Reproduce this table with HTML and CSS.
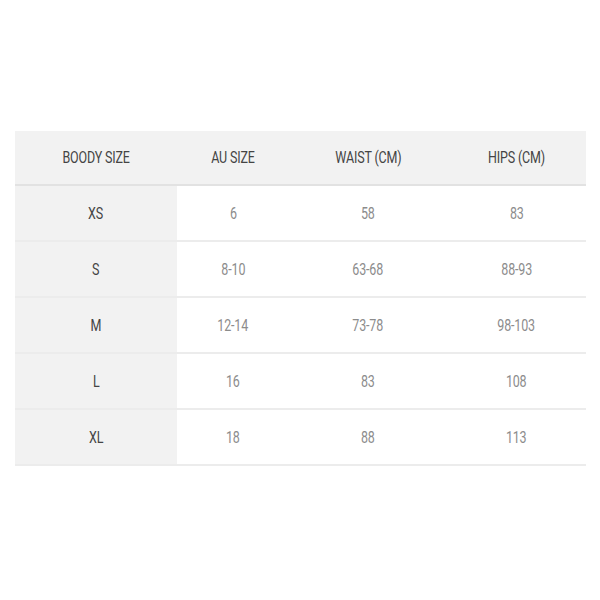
FILE: index.html
```html
<!DOCTYPE html>
<html>
<head>
<meta charset="utf-8">
<link rel="stylesheet" href="styles.css">
</head>
<body>
<div class="page">
<table class="size-table">
  <thead>
    <tr><th class="c1"><span>BOODY SIZE</span></th><th class="c2"><span>AU SIZE</span></th><th class="c3"><span>WAIST (CM)</span></th><th class="c4"><span>HIPS (CM)</span></th></tr>
  </thead>
  <tbody>
    <tr><td class="lab"><span>XS</span></td><td><span>6</span></td><td><span>58</span></td><td><span>83</span></td></tr>
    <tr><td class="lab"><span>S</span></td><td><span>8-10</span></td><td><span>63-68</span></td><td><span>88-93</span></td></tr>
    <tr><td class="lab"><span>M</span></td><td><span>12-14</span></td><td><span>73-78</span></td><td><span>98-103</span></td></tr>
    <tr><td class="lab"><span>L</span></td><td><span>16</span></td><td><span>83</span></td><td><span>108</span></td></tr>
    <tr><td class="lab"><span>XL</span></td><td><span>18</span></td><td><span>88</span></td><td><span>113</span></td></tr>
  </tbody>
</table>
</div>
</body>
</html>
```
FILE: styles.css
```css
html, body { margin: 0; padding: 0; background: #fff; }
.page { padding: 131px 14px 0 15px; }
.size-table {
  width: 571px;
  border-collapse: collapse;
  table-layout: fixed;
  font-family: Roboto, "Liberation Sans", sans-serif;
  font-size: 16px;
}
.size-table th, .size-table td { text-align: center; padding: 0; }
.size-table span { display: inline-block; transform: scaleX(0.78); letter-spacing: -0.2px; }
.c1 { width: 162px; }
.c2 { width: 112px; }
.c3 { width: 158px; }
.c4 { width: 139px; }
.size-table thead th {
  background: #f2f2f2;
  height: 53px;
  font-weight: 400;
  color: #444;
  border-bottom: 2px solid #e2e2e2;
}
.size-table td {
  height: 54px;
  color: #8c8c8c;
  border-bottom: 2px solid #ececec;
}
.size-table td.lab { background: #f2f2f2; color: #444; }
```
